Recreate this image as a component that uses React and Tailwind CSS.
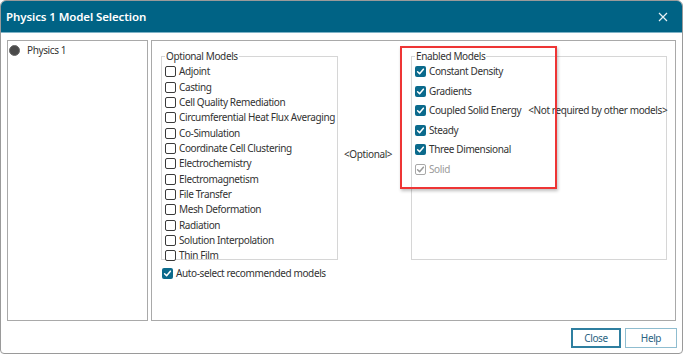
import React from "react";

const optionalModels = [
  "Adjoint",
  "Casting",
  "Cell Quality Remediation",
  "Circumferential Heat Flux Averaging",
  "Co-Simulation",
  "Coordinate Cell Clustering",
  "Electrochemistry",
  "Electromagnetism",
  "File Transfer",
  "Mesh Deformation",
  "Radiation",
  "Solution Interpolation",
  "Thin Film",
];

const enabledModels = [
  { name: "Constant Density" },
  { name: "Gradients" },
  { name: "Coupled Solid Energy", note: "<Not required by other models>" },
  { name: "Steady" },
  { name: "Three Dimensional" },
  { name: "Solid", disabled: true },
];

function Box({ checked, disabled }) {
  if (!checked) {
    return <span className="w-[11px] h-[11px] shrink-0 rounded-[2px] border border-[#3a3a3a] bg-white" />;
  }
  return (
    <span
      className={
        "w-[11px] h-[11px] shrink-0 rounded-[2px] flex items-center justify-center " +
        (disabled ? "border border-[#a8a8a8] bg-white" : "bg-[#0b6a8c]")
      }
    >
      <svg width="9" height="9" viewBox="0 0 9 9">
        <path
          d="M1.6 4.8 L3.6 6.8 L7.4 2.2"
          fill="none"
          stroke={disabled ? "#9a9a9a" : "#ffffff"}
          strokeWidth="1.5"
          strokeLinecap="round"
          strokeLinejoin="round"
        />
      </svg>
    </span>
  );
}

export default function App() {
  return (
    <div className="w-[684px] h-[355px] bg-white text-[10px] tracking-[-0.38px] text-[#333] font-['Noto_Sans',sans-serif]">
      <div className="w-[683px] h-[354px] border border-[#9a9a9a] rounded-t-[6px] rounded-b-[4px] flex flex-col overflow-hidden">
        {/* Title bar */}
        <div className="h-[32px] bg-[#006385] border-b border-[#7fb3c7] flex items-center justify-between pl-[5px] pr-[14px] shrink-0">
          <span className="text-white font-semibold text-[11.5px] tracking-[-0.1px]">Physics 1 Model Selection</span>
          <svg width="10" height="10" viewBox="0 0 10 10">
            <path d="M1 1 L9 9 M9 1 L1 9" stroke="#e8f1f5" strokeWidth="1.2" />
          </svg>
        </div>

        {/* Body */}
        <div className="flex gap-[3px] pl-[6px] pt-[7px]">
          {/* Tree */}
          <div className="w-[141px] h-[281px] border border-[#a9a9a9] pt-[2px] pl-[1px]">
            <div className="flex items-center gap-[7px]">
              <span className="w-[11px] h-[11px] rounded-full bg-[#4a4a4a] border border-[#6a6a6a]" />
              <span>Physics 1</span>
            </div>
          </div>

          {/* Main panel */}
          <div className="relative w-[525px] h-[281px] border border-[#a9a9a9] pl-[9px] pt-[10px]">
            <div className="flex items-start">
              <div className="flex flex-col">
                <fieldset className="w-[177px] min-w-0 h-[209px] border border-[#d6d6d6] pl-[3px] pt-0 m-0">
                  <legend className="px-[1px] leading-[11px]">Optional Models</legend>
                  <div className="flex flex-col pt-[2px]">
                    {optionalModels.map((m) => (
                      <div key={m} className="h-[15.35px] flex items-center gap-[3px]">
                        <Box checked={false} />
                        <span className="whitespace-nowrap">{m}</span>
                      </div>
                    ))}
                  </div>
                </fieldset>
                <div className="flex items-center gap-[3px] mt-[6px] pl-[1px]">
                  <Box checked />
                  <span className="whitespace-nowrap">Auto-select recommended models</span>
                </div>
              </div>

              <div className="w-[73px] pt-[96px] pl-[6px] whitespace-nowrap">&lt;Optional&gt;</div>

              <fieldset className="w-[256px] min-w-0 h-[209px] border border-[#d6d6d6] pl-[3px] pt-0 m-0">
                <legend className="px-[1px] leading-[11px]">Enabled Models</legend>
                <div className="flex flex-col">
                  {enabledModels.map((m) => (
                    <div key={m.name} className="h-[19.5px] flex items-center gap-[3px]">
                      <Box checked disabled={m.disabled} />
                      <span className={"whitespace-nowrap " + (m.disabled ? "text-[#9a9a9a]" : "")}>{m.name}</span>
                      {m.note && <span className="whitespace-nowrap ml-[4px]">{m.note}</span>}
                    </div>
                  ))}
                </div>
              </fieldset>
            </div>

            {/* highlight */}
            <div className="absolute left-[248px] top-[5px] w-[157px] h-[143px] border-2 border-[#ee3535] shadow-[1px_2px_3px_rgba(0,0,0,0.25)] pointer-events-none" />
          </div>
        </div>

        {/* Buttons */}
        <div className="flex justify-end gap-[4px] pr-[5px] pt-[7px]">
          <button className="w-[50px] h-[20px] border-2 border-[#2f7fa0] text-[#2b6482] bg-white leading-none">Close</button>
          <button className="w-[52px] h-[20px] border border-[#8fbdd0] text-[#2b6482] bg-white leading-none">Help</button>
        </div>
      </div>
    </div>
  );
}
